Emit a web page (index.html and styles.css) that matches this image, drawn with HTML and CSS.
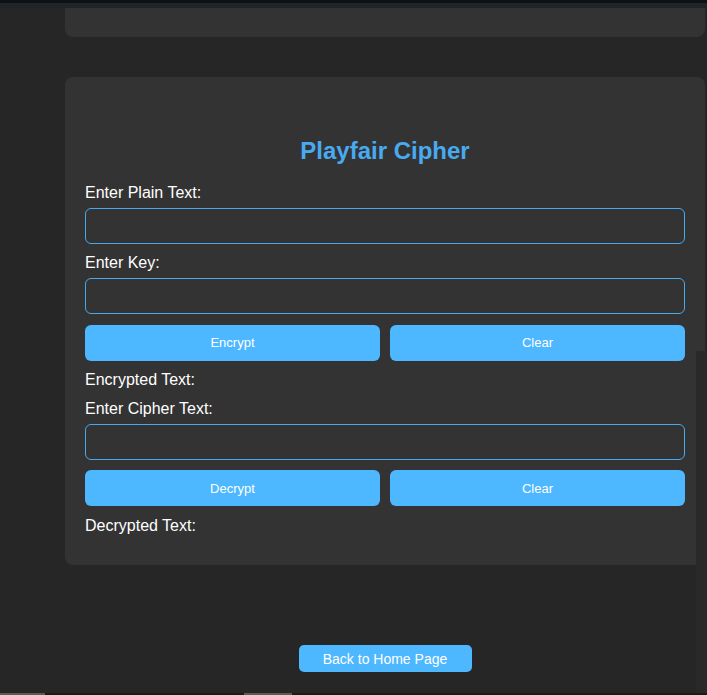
FILE: index.html
```html
<!DOCTYPE html>
<html lang="en">
<head>
<meta charset="utf-8">
<title>Playfair Cipher</title>
<link rel="stylesheet" href="styles.css">
</head>
<body>
  <div class="topbar"></div>
  <main class="page">
    <section class="card card-prev"></section>
    <section class="card cipher">
      <h2 class="title">Playfair Cipher</h2>
      <label class="label first">Enter Plain Text:</label>
      <input class="field" type="text">
      <label class="label">Enter Key:</label>
      <input class="field" type="text">
      <div class="btn-row">
        <button class="btn">Encrypt</button>
        <button class="btn">Clear</button>
      </div>
      <p class="label result">Encrypted Text:</p>
      <label class="label">Enter Cipher Text:</label>
      <input class="field" type="text">
      <div class="btn-row">
        <button class="btn">Decrypt</button>
        <button class="btn">Clear</button>
      </div>
      <p class="label result">Decrypted Text:</p>
    </section>
    <div class="back-wrap">
      <button class="back-btn">Back to Home Page</button>
    </div>
  </main>
  <div class="side-overlay"></div>
  <div class="bottom-strip">
    <span class="thumb thumb-a"></span>
    <span class="thumb thumb-b"></span>
  </div>
</body>
</html>
```

FILE: styles.css
```css
* { box-sizing: border-box; }
html, body {
  margin: 0;
  padding: 0;
  background: #262626;
  font-family: "Liberation Sans", Arial, sans-serif;
  color: #ffffff;
  overflow: hidden;
}
body {
  width: 707px;
  height: 695px;
  position: relative;
}
.topbar {
  height: 8px;
  background: #1f2428;
  border-top: 3px solid #0f1115;
}
.page {
  display: flex;
  flex-direction: column;
  padding: 0 2px 0 65px;
}
.card {
  background: #333333;
  border-radius: 8px;
}
.card-prev {
  height: 29px;
  border-top-left-radius: 0;
  border-top-right-radius: 0;
}
.cipher {
  margin-top: 40px;
  padding: 60px 20px 29.5px;
  display: flex;
  flex-direction: column;
}
.title {
  margin: 0;
  text-align: center;
  font-size: 24px;
  line-height: 28px;
  font-weight: bold;
  color: #48aaf0;
}
.label {
  display: block;
  margin: 10px 0 0;
  font-size: 16px;
  line-height: 18.4px;
  color: #ffffff;
}
.label.first { margin-top: 19.3px; }
.label.result { margin-top: 10.3px; }
.field {
  margin-top: 5.6px;
  height: 36px;
  width: 100%;
  background: #333333;
  border: 1px solid #4aa8f0;
  border-radius: 6px;
  outline: none;
  color: #fff;
  font-family: inherit;
  font-size: 14px;
  padding: 0 10px;
}
.btn-row {
  margin-top: 10.7px;
  display: grid;
  grid-template-columns: 1fr 1fr;
  gap: 10px;
}
.btn {
  height: 36px;
  border: none;
  border-radius: 6px;
  background: #4db7ff;
  color: #ffffff;
  font-family: "Liberation Sans", Arial, sans-serif;
  font-size: 13px;
  padding: 0;
}
.back-wrap {
  display: flex;
  justify-content: center;
  margin-top: 80.7px;
}
.back-btn {
  width: 173px;
  height: 27px;
  border: none;
  border-radius: 5px;
  background: #4db7ff;
  color: #ffffff;
  font-family: "Liberation Sans", Arial, sans-serif;
  font-size: 14px;
  padding: 0;
}
.side-overlay {
  position: absolute;
  left: 696px;
  top: 351px;
  width: 11px;
  height: 342px;
  background: #292929;
}
.bottom-strip {
  position: absolute;
  left: 0;
  bottom: 0;
  width: 707px;
  height: 2px;
  background: #1a1a1a;
}
.thumb {
  position: absolute;
  top: 0;
  height: 2px;
  background: #5a5a5a;
}
.thumb-a { left: 0; width: 45px; }
.thumb-b { left: 244px; width: 48px; }
```
